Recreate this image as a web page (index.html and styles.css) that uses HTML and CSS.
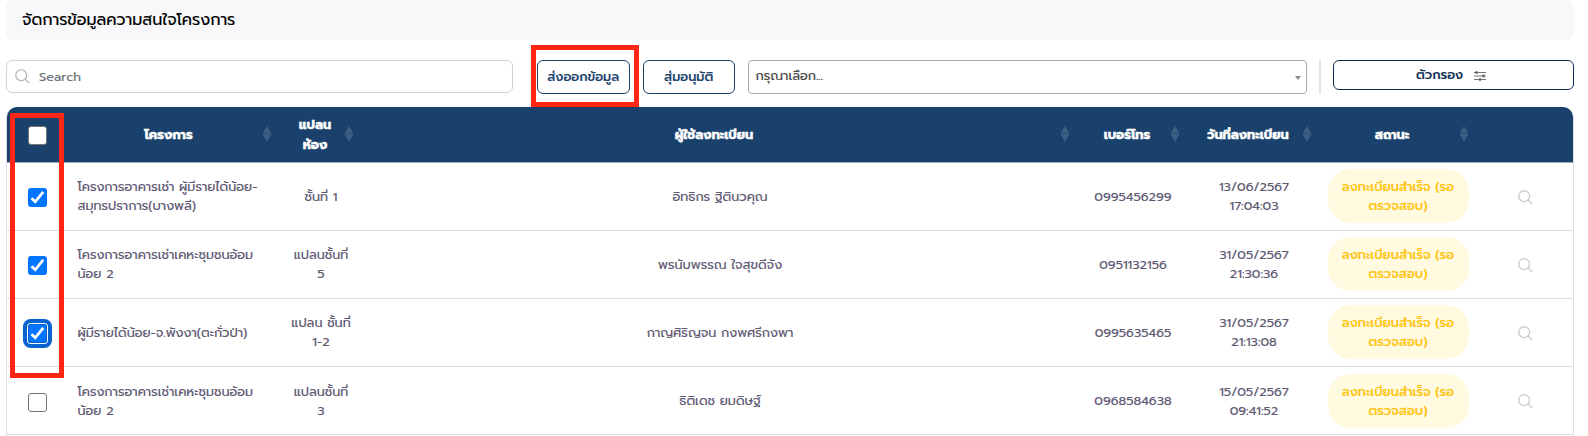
FILE: index.html
```html
<!DOCTYPE html>
<html lang="th">
<head>
<meta charset="utf-8">
<title>จัดการข้อมูลความสนใจโครงการ</title>
<link rel="stylesheet" href="styles.css">
</head>
<body>
<svg class="defs" width="0" height="0">
  <symbol id="search" viewBox="0 0 16 16"><circle cx="6.6" cy="6.6" r="5.8"/><path d="M10.8 10.8 15.2 15"/></symbol>
  <symbol id="sort" viewBox="0 0 10 16"><path d="M5 0 9.5 7.6H.5ZM.5 8.1H9.5L5 16Z"/></symbol>
  <symbol id="check" viewBox="0 0 19 19"><path d="M3.5 10.2 7.3 13.8 15.2 3.8"/></symbol>
</svg>
<header class="title"><span>จัดการข้อมูลความสนใจโครงการ</span></header>
<div class="toolbar">
  <div class="search"><svg class="search-icon"><use href="#search"/></svg><span>Search</span></div>
  <button class="btn export"><span>ส่งออกข้อมูล</span><i class="mark mark-export"></i></button>
  <button class="btn random"><span>สุ่มอนุมัติ</span></button>
  <div class="select"><span>กรุณาเลือก...</span><i class="caret"></i></div>
  <div class="divider"></div>
  <button class="btn filter"><span>ตัวกรอง</span>
    <svg class="sliders" viewBox="0 0 12 10"><path d="M0 1.5H12M0 5H12M0 8.5H12"/><circle cx="2.5" cy="1.5" r="1.1"/><circle cx="9.5" cy="5" r="1.1"/><circle cx="6" cy="8.5" r="1.1"/></svg>
  </button>
</div>
<main class="table">
  <div class="row head">
    <div class="cell"><i class="box"></i><i class="mark mark-checks"></i></div>
    <div class="cell h-project"><span>โครงการ</span><svg class="sort s1"><use href="#sort"/></svg></div>
    <div class="cell"><span>แปลน<br>ห้อง</span><svg class="sort s2"><use href="#sort"/></svg></div>
    <div class="cell"><span>ผู้ใช้ลงทะเบียน</span><svg class="sort s1"><use href="#sort"/></svg></div>
    <div class="cell"><span>เบอร์โทร</span><svg class="sort s2"><use href="#sort"/></svg></div>
    <div class="cell"><span>วันที่ลงทะเบียน</span><svg class="sort s1"><use href="#sort"/></svg></div>
    <div class="cell"><span>สถานะ</span><svg class="sort s3"><use href="#sort"/></svg></div>
    <div class="cell"></div>
  </div>
  <div class="row">
    <div class="cell"><i class="box on"><svg><use href="#check"/></svg></i></div>
    <div class="cell project"><span>โครงการอาคารเช่า ผู้มีรายได้น้อย-<br>สมุทรปราการ(บางพลี)</span></div>
    <div class="cell"><span>ชั้นที่ 1</span></div>
    <div class="cell"><span>อิทธิกร ฐิตินวคุณ</span></div>
    <div class="cell"><span>0995456299</span></div>
    <div class="cell"><span>13/06/2567<br>17:04:03</span></div>
    <div class="cell"><span class="pill">ลงทะเบียนสำเร็จ (รอ<br>ตรวจสอบ)</span></div>
    <div class="cell"><svg class="view"><use href="#search"/></svg></div>
  </div>
  <div class="row">
    <div class="cell"><i class="box on"><svg><use href="#check"/></svg></i></div>
    <div class="cell project"><span>โครงการอาคารเช่าเคหะชุมชนอ้อม<br>น้อย 2</span></div>
    <div class="cell"><span>แปลนชั้นที่<br>5</span></div>
    <div class="cell"><span>พรนับพรรณ ใจสุขดีจัง</span></div>
    <div class="cell"><span>0951132156</span></div>
    <div class="cell"><span>31/05/2567<br>21:30:36</span></div>
    <div class="cell"><span class="pill">ลงทะเบียนสำเร็จ (รอ<br>ตรวจสอบ)</span></div>
    <div class="cell"><svg class="view"><use href="#search"/></svg></div>
  </div>
  <div class="row">
    <div class="cell"><i class="box on focus"><svg><use href="#check"/></svg></i></div>
    <div class="cell project"><span>ผู้มีรายได้น้อย-จ.พังงา(ตะกั่วป่า)</span></div>
    <div class="cell"><span>แปลน ชั้นที่<br>1-2</span></div>
    <div class="cell"><span>กาญศิริญจน กงพศรีกงพา</span></div>
    <div class="cell"><span>0995635465</span></div>
    <div class="cell"><span>31/05/2567<br>21:13:08</span></div>
    <div class="cell"><span class="pill">ลงทะเบียนสำเร็จ (รอ<br>ตรวจสอบ)</span></div>
    <div class="cell"><svg class="view"><use href="#search"/></svg></div>
  </div>
  <div class="row">
    <div class="cell"><i class="box"></i></div>
    <div class="cell project"><span>โครงการอาคารเช่าเคหะชุมชนอ้อม<br>น้อย 2</span></div>
    <div class="cell"><span>แปลนชั้นที่<br>3</span></div>
    <div class="cell"><span>ธิติเดช ยมดิษฐ์</span></div>
    <div class="cell"><span>0968584638</span></div>
    <div class="cell"><span>15/05/2567<br>09:41:52</span></div>
    <div class="cell"><span class="pill">ลงทะเบียนสำเร็จ (รอ<br>ตรวจสอบ)</span></div>
    <div class="cell"><svg class="view"><use href="#search"/></svg></div>
  </div>
</main>
</body>
</html>
```
FILE: styles.css
```css
* { box-sizing: border-box; }
body { margin: 0; padding: 0 14px 0 6px; height: 436px; overflow: hidden; background: #fff; color: #5e5873; font: 12.8px/19.2px "Prompt", "Noto Sans Thai", "Noto Sans", sans-serif; white-space: nowrap; -webkit-text-stroke: .15px currentColor; }
.defs { position: absolute; }
.title { height: 40px; padding: 1px 0 0 16px; display: flex; align-items: center; background: #f8f8fb; border-radius: 8px; color: #000; font-size: 16px; }
.toolbar { margin-top: 20px; height: 47px; display: flex; align-items: flex-start; }
.search { width: 507px; height: 33px; border: 1px solid #ced4da; border-radius: 6px; display: flex; align-items: center; color: #6c757d; padding-left: 8px; }
.search-icon { width: 15px; height: 15px; margin-right: 9px; fill: none; stroke: #a8acb8; stroke-width: 1.2; }
.btn { position: relative; height: 34px; padding: 0; border: 1px solid #19416c; border-radius: 6px; background: #fff; color: #19416c; font: inherit; font-weight: 500; display: flex; align-items: center; justify-content: center; }
.export { width: 93px; margin-left: 24px; }
.random { width: 92px; margin-left: 13px; }
.select { width: 560px; height: 34px; margin-left: 13px; border: 1px solid #aaa; border-radius: 4px; padding: 0 5px 2px 7px; display: flex; align-items: center; justify-content: space-between; color: #444; }
.caret { border: 3px solid transparent; border-top: 4px solid #888; border-bottom: 0; margin-top: 4px; }
.divider { width: 2px; height: 34px; margin-left: 12px; background: #e3e3e5; }
.filter { width: 241px; height: 30px; margin-left: 12px; padding-right: 5px; border-color: #0d2c54; color: #0d2c54; gap: 11px; }
.sliders { width: 12px; height: 10px; margin-top: 2px; stroke: #777; fill: #555; stroke-width: 1; }
.mark { position: absolute; border: 5px solid #ff2713; z-index: 2; }
.mark-export { left: -7px; top: -16px; width: 108px; height: 62px; }
.mark-checks { left: 3px; top: 6px; width: 54px; height: 265px; }
.table { height: 340px; border: solid #dddde5; border-width: 0 1px; border-radius: 10px 10px 0 0; }
.row { display: grid; grid-template-columns: 61px 210px 86px 712px 114px 128px 160px 95px; height: 68px; border-bottom: 1px solid #dddde5; }
.head { height: 56px; background: #19416c; color: #fff; border-radius: 10px 10px 0 0; font-weight: 700; line-height: 20px; border-bottom-color: #a4abb7; -webkit-text-stroke-width: .4px; }
.cell { position: relative; display: flex; align-items: center; justify-content: center; text-align: center; }
.row:not(.head) .cell { padding-top: 1px; }
.row:not(.head):not(:last-child) .cell:has(br) { padding: 0 0 1px; }
.head .cell:not(:first-child) { padding-right: 12px; }
.head .h-project.cell { padding-right: 9px; }
.row .project.project span { padding-left: 9.5px; text-align: left; }
.cell.project { justify-content: flex-start; }
.sort { position: absolute; width: 10px; height: 16px; top: 19px; right: 6px; fill: #3b5e82; }
.s2 { right: 10px; }
.s3 { right: 9px; }
.box { width: 19px; height: 19px; border: 1px solid #767676; border-radius: 3px; background: #fff; margin-top: 1px; }
.head .box { margin-top: 0; position: relative; top: .5px; }
.row:last-child .box { margin-top: 3px; }
.box.on { border: 0; background: #0075ff; }
.box svg { display: block; width: 19px; height: 19px; fill: none; stroke: #fff; stroke-width: 2.8; }
.focus { box-shadow: inset 0 0 0 1px #0862cf, 0 0 0 1px #fff, 0 0 0 5px #0862cf; }
.pill { width: 141px; padding: 8px 0; border-radius: 22px; background: #fffae0; color: #ffc40f; font-weight: 500; }
.view { width: 15px; height: 15px; fill: none; stroke: #ccc; stroke-width: 1.4; }
```
